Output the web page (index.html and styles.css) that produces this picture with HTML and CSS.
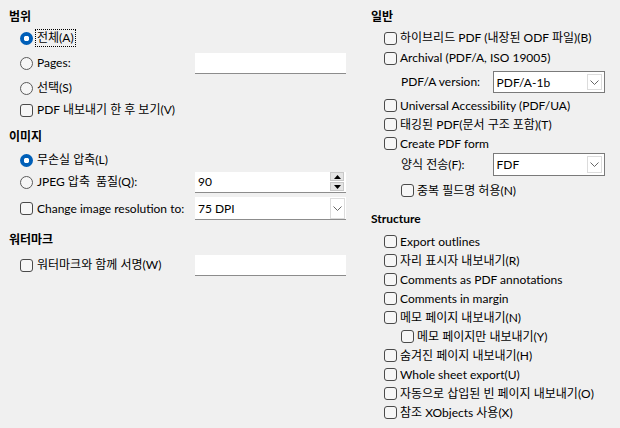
FILE: index.html
```html
<!DOCTYPE html>
<html lang="ko">
<head>
<meta charset="utf-8">
<link rel="stylesheet" href="styles.css">
</head>
<body>
<div class="page">
  <div class="col left">
    <div class="heading h-first">범위</div>
    <div class="row r22 mt1"><span class="radio on"></span><span class="lbl focus">전체(A)</span></div>
    <div class="row r22 mt3"><span class="radio"></span><span class="lbl">Pages:</span><span class="field input"></span></div>
    <div class="row r22 mt3"><span class="radio"></span><span class="lbl">선택(S)</span></div>
    <div class="row r22"><span class="check"></span><span class="lbl">PDF 내보내기 한 후 보기(V)</span></div>

    <div class="heading mt7">이미지</div>
    <div class="row r22 mt3"><span class="radio on"></span><span class="lbl">무손실 압축(L)</span></div>
    <div class="row r22"><span class="radio"></span><span class="lbl">JPEG 압축&nbsp; 품질(Q):</span>
      <span class="field input spin"><span class="val">90</span>
        <span class="spinbtns"><span class="sb"><svg width="7" height="4" viewBox="0 0 7 4"><polygon points="3.5,0 7,4 0,4" fill="#000"/></svg></span><span class="sb"><svg width="7" height="4" viewBox="0 0 7 4"><polygon points="0,0 7,0 3.5,4" fill="#000"/></svg></span></span>
      </span>
    </div>
    <div class="row r23 mt4"><span class="check"></span><span class="lbl">Change image resolution to:</span>
      <span class="field input combo flat"><span class="val">75 DPI</span><span class="dd"><svg width="9" height="5" viewBox="0 0 9 5"><polyline points="0.5,0.5 4.5,4.5 8.5,0.5" fill="none" stroke="#666" stroke-width="1"/></svg></span></span>
    </div>

    <div class="heading mt11">워터마크</div>
    <div class="row r22 mt5"><span class="check"></span><span class="lbl">워터마크와 함께 서명(W)</span><span class="field input"></span></div>
  </div>

  <div class="col right">
    <div class="heading h-first">일반</div>
    <div class="row r20 mt2"><span class="check"></span><span class="lbl">하이브리드 PDF (내장된 ODF 파일)(B)</span></div>
    <div class="row r20"><span class="check"></span><span class="lbl">Archival (PDF/A, ISO 19005)</span></div>
    <div class="row r22 mt3 sub"><span class="lbl sublbl">PDF/A version:</span>
      <span class="field combo boxed"><span class="val">PDF/A-1b</span><span class="dd"><svg width="9" height="5" viewBox="0 0 9 5"><polyline points="0.5,0.5 4.5,4.5 8.5,0.5" fill="none" stroke="#666" stroke-width="1"/></svg></span></span>
    </div>
    <div class="row r19 mt3"><span class="check"></span><span class="lbl">Universal Accessibility (PDF/UA)</span></div>
    <div class="row r19"><span class="check"></span><span class="lbl">태깅된 PDF(문서 구조 포함)(T)</span></div>
    <div class="row r19"><span class="check"></span><span class="lbl">Create PDF form</span></div>
    <div class="row r23 sub"><span class="lbl sublbl">양식 전송(F):</span>
      <span class="field combo boxed"><span class="val">FDF</span><span class="dd"><svg width="9" height="5" viewBox="0 0 9 5"><polyline points="0.5,0.5 4.5,4.5 8.5,0.5" fill="none" stroke="#666" stroke-width="1"/></svg></span></span>
    </div>
    <div class="row r19 mt5 sub"><span class="check"></span><span class="lbl">중복 필드명 허용(N)</span></div>

    <div class="heading mt10">Structure</div>
    <div class="row r19 mt4"><span class="check"></span><span class="lbl">Export outlines</span></div>
    <div class="row r19"><span class="check"></span><span class="lbl">자리 표시자 내보내기(R)</span></div>
    <div class="row r19"><span class="check"></span><span class="lbl">Comments as PDF annotations</span></div>
    <div class="row r19"><span class="check"></span><span class="lbl">Comments in margin</span></div>
    <div class="row r19"><span class="check"></span><span class="lbl">메모 페이지 내보내기(N)</span></div>
    <div class="row r19 sub"><span class="check"></span><span class="lbl">메모 페이지만 내보내기(Y)</span></div>
    <div class="row r19"><span class="check"></span><span class="lbl">숨겨진 페이지 내보내기(H)</span></div>
    <div class="row r19"><span class="check"></span><span class="lbl">Whole sheet export(U)</span></div>
    <div class="row r19"><span class="check"></span><span class="lbl">자동으로 삽입된 빈 페이지 내보내기(O)</span></div>
    <div class="row r19"><span class="check"></span><span class="lbl">참조 XObjects 사용(X)</span></div>
  </div>
</div>
</body>
</html>
```

FILE: styles.css
```css
html, body {
  margin: 0;
  padding: 0;
  background: #f0f0f0;
}
body {
  font-family: Lato, "Noto Sans CJK KR", sans-serif;
  font-size: 12px;
  color: #000;
  width: 620px;
  height: 428px;
  overflow: hidden;
}
.page {
  display: flex;
  padding-left: 9px;
}
.col {
  display: flex;
  flex-direction: column;
}
.left { width: 337px; }
.right { width: 234px; margin-left: 25px; }

.heading {
  height: 18px;
  line-height: 18px;
  font-weight: bold;
}
.h-first { margin-top: 8px; }

.row {
  display: flex;
  align-items: center;
  padding-left: 11px;
}
.right .row { padding-left: 13px; }
.right .row.sub { padding-left: 30px; }

.r19 { height: 19px; }
.r20 { height: 20px; }
.r22 { height: 22px; }
.r23 { height: 23px; }
.mt1 { margin-top: 1px; }
.mt2 { margin-top: 2px; }
.mt3 { margin-top: 3px; }
.mt4 { margin-top: 4px; }
.mt5 { margin-top: 5px; }
.mt7 { margin-top: 7px; }
.mt10 { margin-top: 10px; }
.mt11 { margin-top: 11px; }

.lbl {
  margin-left: 4px;
  white-space: nowrap;
  line-height: 16px;
}
.right .lbl { margin-left: 3px; }
.right .sublbl { margin-left: 0; width: 92px; }
.focus {
  outline: 1px dotted #000;
  outline-offset: 0;
  padding: 0 1px;
  margin-left: 3px;
}

.radio {
  width: 13px;
  height: 13px;
  box-sizing: border-box;
  border-radius: 50%;
  border: 1px solid #5a5a5a;
  background: #f6f6f6;
  flex: none;
}
.radio.on {
  border: none;
  background: radial-gradient(circle, #fff 0 2.6px, #005fb8 3px);
}
.check {
  width: 13px;
  height: 13px;
  box-sizing: border-box;
  border-radius: 3px;
  border: 1px solid #4a4a4a;
  background: #f6f6f6;
  flex: none;
}

.field {
  box-sizing: border-box;
  background: #fff;
  display: flex;
  align-items: center;
}
.left .field {
  margin-left: auto;
  width: 151px;
  height: 21px;
  border-bottom: 1px solid #8c8c8c;
}
.left .field.flat { height: 23px; }
.val { padding-left: 3px; flex: 1; }
.spinbtns {
  display: flex;
  flex-direction: column;
  gap: 1px;
  margin-right: 2px;
}
.sb {
  width: 14px;
  height: 9px;
  box-sizing: border-box;
  border: 1px solid #c8c8c8;
  background: #e5e5e5;
  display: flex;
  align-items: center;
  justify-content: center;
}
.dd {
  width: 16px;
  align-self: stretch;
  box-sizing: border-box;
  border-left: 1px solid #dcdcdc;
  display: flex;
  align-items: center;
  justify-content: center;
  background: #fff;
}
.flat .dd {
  border: 1px solid #dcdcdc;
  margin: 1px 1px 0 0;
  width: 15px;
}
.boxed {
  width: 113px;
  height: 100%;
  border: 1px solid #7a7a7a;
}
.boxed .dd {
  margin: 2px 2px 2px 0;
  border: 1px solid #dcdcdc;
  width: 15px;
}
```
